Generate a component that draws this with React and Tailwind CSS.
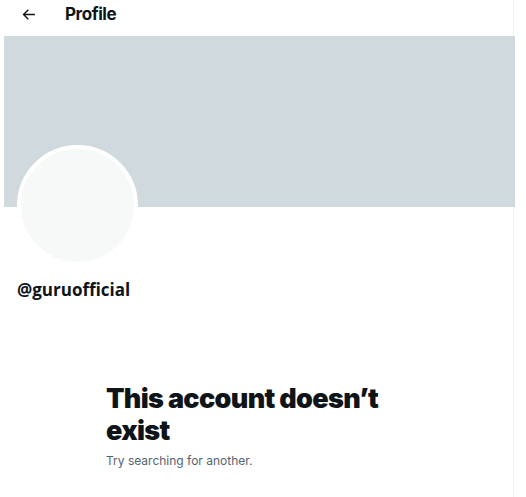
const App = () => {
    return (
        <div className="w-[526px] h-[497px] bg-white overflow-hidden" style={{ fontFamily: "Inter, 'Noto Sans', sans-serif" }}>
            <div className="w-[514px] h-full pl-1 border-r border-[#eff3f4]">

                {/* header */}
                <div className="h-[29px] mb-[7px] flex items-center">
                    <svg viewBox="0 0 24 24" className="w-[17px] h-[17px] ml-[16px] text-[#0f1419]" fill="currentColor">
                        <path d="M7.414 13l5.043 5.04-1.414 1.42L3.586 12l7.457-7.46 1.414 1.42L7.414 11H21v2H7.414z" />
                    </svg>
                    <h1 className="ml-[28px] text-[17px] font-bold text-[#0f1419] tracking-tight">Profile</h1>
                </div>

                {/* banner */}
                <div className="w-[511px] h-[171px] bg-[#cfd9de]"></div>

                {/* avatar */}
                <div className="ml-[13px] -mt-[62px] w-[121px] h-[121px] rounded-full bg-[#f7f9f9] border-4 border-white"></div>

                <div className="ml-[13px] mt-[12px] text-[17px] leading-[24px] font-bold text-[#0f1419]" style={{ fontFamily: "'Open Sans', sans-serif" }}>@guruofficial</div>

                <div className="ml-[102px] mt-[81px] w-[300px]">
                    <h2 className="text-[27px] leading-[32px] font-black text-[#0f1419] tracking-tight">
                        This account doesn’t exist
                    </h2>
                    <p className="mt-[5px] text-[12px] text-[#536471]">Try searching for another.</p>
                </div>

            </div>
        </div>
    );
};

export default App;
